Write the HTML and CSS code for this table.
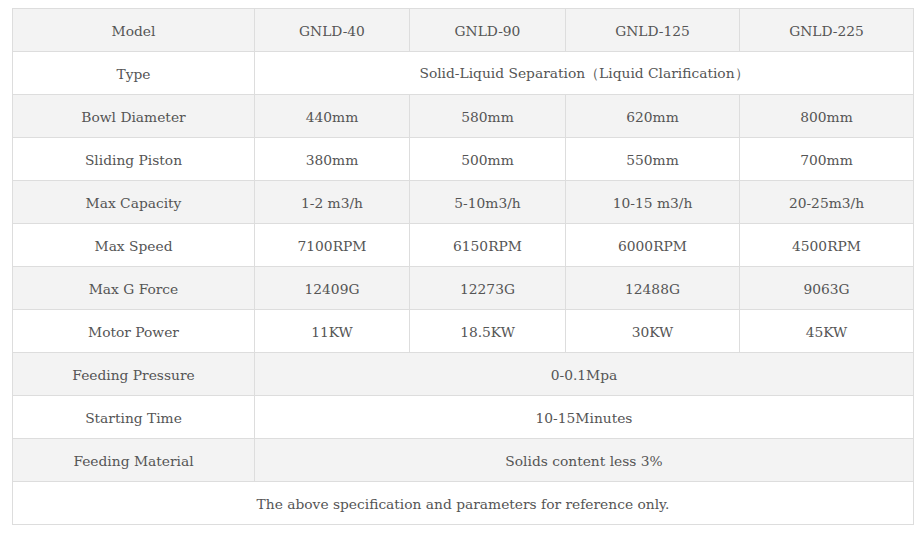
FILE: index.html
```html
<!DOCTYPE html>
<html>
<head>
<meta charset="utf-8">
<link rel="stylesheet" href="styles.css">
</head>
<body>
<table class="spec">
  <colgroup>
    <col class="c-label"><col class="c-a"><col class="c-b"><col class="c-c"><col class="c-d">
  </colgroup>
  <tbody>
    <tr class="shade"><td>Model</td><td>GNLD-40</td><td>GNLD-90</td><td>GNLD-125</td><td>GNLD-225</td></tr>
    <tr><td>Type</td><td colspan="4">Solid-Liquid Separation（Liquid Clarification）</td></tr>
    <tr class="shade"><td>Bowl Diameter</td><td>440mm</td><td>580mm</td><td>620mm</td><td>800mm</td></tr>
    <tr><td>Sliding Piston</td><td>380mm</td><td>500mm</td><td>550mm</td><td>700mm</td></tr>
    <tr class="shade"><td>Max Capacity</td><td>1-2 m3/h</td><td>5-10m3/h</td><td>10-15 m3/h</td><td>20-25m3/h</td></tr>
    <tr><td>Max Speed</td><td>7100RPM</td><td>6150RPM</td><td>6000RPM</td><td>4500RPM</td></tr>
    <tr class="shade"><td>Max G Force</td><td>12409G</td><td>12273G</td><td>12488G</td><td>9063G</td></tr>
    <tr><td>Motor Power</td><td>11KW</td><td>18.5KW</td><td>30KW</td><td>45KW</td></tr>
    <tr class="shade"><td>Feeding Pressure</td><td colspan="4">0-0.1Mpa</td></tr>
    <tr><td>Starting Time</td><td colspan="4">10-15Minutes</td></tr>
    <tr class="shade"><td>Feeding Material</td><td colspan="4">Solids content less 3%</td></tr>
    <tr><td colspan="5">The above specification and parameters for reference only.</td></tr>
  </tbody>
</table>
</body>
</html>
```

FILE: styles.css
```css
html, body {
  margin: 0;
  padding: 0;
  background: #ffffff;
}
body {
  padding: 8px 0 0 12px;
}
.spec {
  border-collapse: collapse;
  table-layout: fixed;
  width: 902px;
  font-family: "DejaVu Serif", "Liberation Serif", serif;
  font-size: 13.8px;
  color: #555555;
}
.c-label { width: 242px; }
.c-a { width: 155px; }
.c-b { width: 156px; }
.c-c { width: 174px; }
.c-d { width: 174px; }
.spec td {
  border: 1px solid #dddddd;
  height: 42px;
  padding: 1px 4px 0;
  box-sizing: border-box;
  text-align: center;
  vertical-align: middle;
}
.spec tr {
  height: 43px;
}
.shade td {
  background: #f3f3f3;
}
```
